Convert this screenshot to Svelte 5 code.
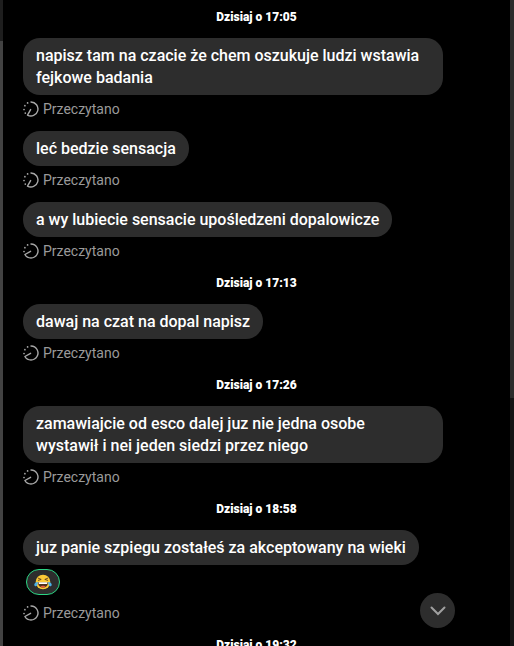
<script lang="ts">
	type Message = { text: string; timer: 'short' | 'long'; reaction?: boolean };
	type Group = { date: string; messages: Message[] };

	let groups: Group[] = [
		{
			date: 'Dzisiaj o 17:05',
			messages: [
				{ text: 'napisz tam na czacie że chem oszukuje ludzi wstawia fejkowe badania', timer: 'short' },
				{ text: 'leć bedzie sensacja', timer: 'short' },
				{ text: 'a wy lubiecie sensacie upośledzeni dopalowicze', timer: 'long' }
			]
		},
		{
			date: 'Dzisiaj o 17:13',
			messages: [{ text: 'dawaj na czat na dopal napisz', timer: 'long' }]
		},
		{
			date: 'Dzisiaj o 17:26',
			messages: [
				{
					text: 'zamawiajcie od esco dalej juz nie jedna osobe wystawił i nei jeden siedzi przez niego',
					timer: 'long'
				}
			]
		},
		{
			date: 'Dzisiaj o 18:58',
			messages: [
				{ text: 'juz panie szpiegu zostałeś za akceptowany na wieki', timer: 'long', reaction: true }
			]
		},
		{ date: 'Dzisiaj o 19:32', messages: [] }
	];

	let list: HTMLElement;
	const scrollDown = () => {
		list.scrollTo({ top: list.scrollHeight });
	};
</script>

<div class="app">
	<div class="edge"><div class="edge-top"></div></div>
	<main bind:this={list}>
		{#each groups as group}
			<section>
				<h2>{group.date}</h2>
				{#each group.messages as message}
					<article>
						<p class="bubble">{message.text}</p>
						{#if message.reaction}
							<button class="reaction" aria-label="Reakcja">
								<svg width="18" height="16" viewBox="0 0 18 16">
									<circle cx="9" cy="8" r="7.3" fill="#fcc936" />
									<path d="M4 8.3h10c0 3.3-2 5.3-5 5.3s-5-2-5-5.3z" fill="#51301c" />
									<path d="M4.5 8.3h9l-.4 1.6H4.9z" fill="#fff" />
									<path d="M6.3 12.7c1.4-1.2 4-1.2 5.4 0-1.5 1.1-3.9 1.1-5.4 0z" fill="#ed5945" />
									<path
										d="M4.3 4.2l2.9 1.2-2.9 1M13.7 4.2l-2.9 1.2 2.9 1"
										fill="none"
										stroke="#51301c"
										stroke-width="0.8"
										stroke-linecap="round"
										stroke-linejoin="round"
									/>
									<path d="M3.9 8C1.5 8.2 0 9.4.3 11c.3 1.6 2.3 1.7 2.9.2.4-1 .5-2 .7-3.2z" fill="#48aee8" />
									<path d="M14.1 8c2.4.2 3.9 1.4 3.6 3-.3 1.6-2.3 1.7-2.9.2-.4-1-.5-2-.7-3.2z" fill="#48aee8" />
								</svg>
							</button>
						{/if}
						<div class="status">
							<svg width="16" height="16" viewBox="0 0 16 16">
								{#if message.timer === 'short'}
									<path d="M8 1a7 7 0 1 1-3.5 13.1L7.6 8.6" />
									<path class="dot" d="M2.3 12.1h.01M1 8.5h.01M1.9 4.7h.01M4.6 1.9h.01" />
								{:else}
									<path d="M8 1a7 7 0 1 1-6.1 10.5L7.6 8.3" />
									<path class="dot" d="M1 8.5h.01M1.9 4.7h.01M4.6 1.9h.01" />
								{/if}
							</svg>
							<span>Przeczytano</span>
						</div>
					</article>
				{/each}
			</section>
		{/each}
	</main>
	<div class="scrollbar"><div class="thumb"></div></div>
	<button class="down" aria-label="Przewiń w dół" on:click={scrollDown}>
		<svg width="16" height="10" viewBox="0 0 16 10">
			<path d="M1.5 1.5L8 8l6.5-6.5" />
		</svg>
	</button>
</div>

<style>
	:global(body) {
		background: #000;
	}
	.app {
		position: relative;
		display: flex;
		height: 100vh;
		overflow: hidden;
		background: #000;
		color: #fff;
		font-family: Roboto, sans-serif;
	}
	.edge {
		flex: 0 0 3px;
		background: #424242;
	}
	.edge-top {
		height: 41px;
		background: #1e1e1e;
	}
	main {
		flex: 1;
		min-width: 0;
		overflow: hidden;
		padding: 7px 20px 0;
	}
	h2 {
		margin: 0 0 11px;
		font-size: 12px;
		font-weight: 900;
		line-height: 20px;
		text-align: center;
	}
	article {
		display: flex;
		flex-direction: column;
		align-items: flex-start;
		margin-bottom: 8px;
	}
	.bubble {
		box-sizing: border-box;
		max-width: 420px;
		margin: 0;
		padding: 7px 13px 6px;
		border-radius: 17px;
		background: #2d2d2d;
		font-size: 16px;
		font-weight: 500;
		line-height: 22px;
	}
	.reaction {
		display: flex;
		align-items: center;
		justify-content: center;
		width: 34px;
		height: 26px;
		margin: 4px 3px;
		padding: 0;
		border: 1px solid #2bd584;
		border-radius: 13px;
		background: #2d2d2d;
		cursor: pointer;
	}
	.status {
		display: flex;
		align-items: center;
		gap: 4px;
		height: 28px;
		color: #9a9a9a;
		font-size: 14px;
	}
	.status svg {
		fill: none;
		stroke: #a8a8a8;
		stroke-width: 1.4;
		stroke-linecap: round;
		stroke-linejoin: round;
	}
	.status .dot {
		stroke-width: 1.7;
	}
	.scrollbar {
		flex: 0 0 4px;
		background: #141414;
	}
	.thumb {
		height: 398px;
		background: #2b2b2b;
	}
	.down {
		position: absolute;
		right: 59px;
		bottom: 18px;
		display: flex;
		align-items: center;
		justify-content: center;
		width: 35px;
		height: 35px;
		padding: 0;
		border: none;
		border-radius: 50%;
		background: #2d2d2d;
		cursor: pointer;
	}
	.down path {
		fill: none;
		stroke: #a0a0a0;
		stroke-width: 2;
		stroke-linecap: round;
	}
</style>
